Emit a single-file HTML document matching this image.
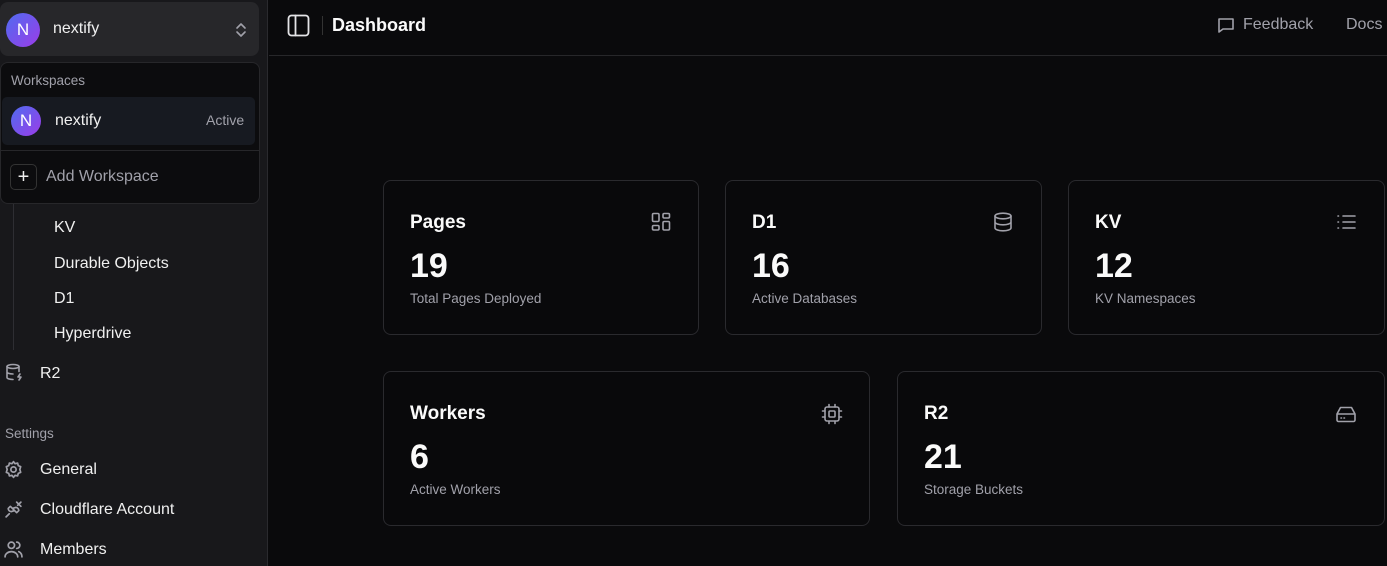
<!DOCTYPE html><html><head><style>
*{box-sizing:border-box;margin:0;padding:0}
body{width:1387px;height:566px;overflow:hidden;background:#0a0a0c;font-family:"Liberation Sans",sans-serif;color:#fafafa;position:relative}
.a{position:absolute}
.sb{left:0;top:0;width:268px;height:566px;background:#18181b;border-right:1px solid #2a2a2e}
.av{border-radius:50%;background:linear-gradient(135deg,#4f6cf0,#9b3ce8);color:#fff;display:flex;align-items:center;justify-content:center;font-size:17px}
.t{font-size:16px;color:#f0f0f0}
.card{position:absolute;border:1px solid #2a2a2e;border-radius:8px;background:#09090b}
.card .h{position:absolute;left:26px;top:31px;font-size:19px;font-weight:bold}
.card .n{position:absolute;left:26px;top:66px;font-size:34px;font-weight:bold}
.card .s{position:absolute;left:26px;top:110px;font-size:13.5px;color:#a1a1aa}
.card svg{position:absolute;top:31px}
svg{fill:none;stroke:#a1a1aa;stroke-width:1.6;stroke-linecap:round;stroke-linejoin:round}
</style></head><body>
<div class="a sb"></div>
<div class="a" style="left:0;top:2px;width:259px;height:54px;background:#27272a;border-radius:8px"></div>
<div class="a av" style="left:6px;top:13px;width:34px;height:34px">N</div>
<div class="a t" style="left:53px;top:20px;font-size:16px">nextify</div>
<svg class="a" style="left:234px;top:21px" width="14" height="18" viewBox="0 0 14 18"><path d="M3 7l4-4 4 4M3 11l4 4 4-4"/></svg>
<div class="a" style="left:13px;top:200px;width:1px;height:150px;background:#2e2e33"></div>
<div class="a" style="left:0;top:62px;width:260px;height:142px;background:#0c0c0e;border:1px solid #27272a;border-radius:8px"></div>
<div class="a" style="left:11px;top:73px;font-size:13.5px;color:#a1a1aa">Workspaces</div>
<div class="a" style="left:2px;top:97px;width:253px;height:48px;background:#171a21;border-radius:5px"></div>
<div class="a av" style="left:11px;top:106px;width:30px;height:30px">N</div>
<div class="a t" style="left:55px;top:112px;font-size:16px">nextify</div>
<div class="a" style="left:206px;top:112px;font-size:14px;color:#a1a1aa">Active</div>
<div class="a" style="left:0;top:150px;width:259px;height:1px;background:#27272a"></div>
<div class="a" style="left:10px;top:164px;width:27px;height:26px;border:1px solid #333;border-radius:5px;display:flex;align-items:center;justify-content:center;font-size:20px;color:#eee">+</div>
<div class="a" style="left:46px;top:168px;font-size:16px;color:#a1a1aa">Add Workspace</div>
<div class="a t" style="left:54px;top:219px">KV</div>
<div class="a t" style="left:54px;top:255px">Durable Objects</div>
<div class="a t" style="left:54px;top:290px">D1</div>
<div class="a t" style="left:54px;top:325px">Hyperdrive</div>
<svg class="a" style="left:5px;top:363px" width="18" height="18" viewBox="0 0 18 18"><ellipse cx="8" cy="3.5" rx="6" ry="2"/><path d="M2 3.5v11c0 1 2.5 2 6 2M14 3.5v5M2 9c0 1 2.5 2 6 2M15 11l-2 3h3l-2 3"/></svg>
<div class="a t" style="left:40px;top:365px">R2</div>
<div class="a" style="left:5px;top:426px;font-size:13.5px;color:#a1a1aa">Settings</div>
<svg class="a" style="left:4px;top:460px" width="19" height="19" viewBox="0 0 18 18"><circle cx="9" cy="9" r="2.5"/><path d="M9 1.5l1.5 2 2.4-.6.6 2.4 2.3 1L15 9l.8 2.7-2.3 1-.6 2.4-2.4-.6L9 16.5l-1.5-2-2.4.6-.6-2.4-2.3-1L3 9l-.8-2.7 2.3-1 .6-2.4 2.4.6z"/></svg>
<div class="a t" style="left:40px;top:461px">General</div>
<svg class="a" style="left:4px;top:500px" width="19" height="19" viewBox="0 0 18 18"><path d="M2 16l3-3M7 11a3 3 0 0 1-3-3l2-2 4 4zM11 7a3 3 0 0 1 3 3l-2 2-4-4zM13 5l3-3M12 2l4 4"/></svg>
<div class="a t" style="left:40px;top:501px">Cloudflare Account</div>
<svg class="a" style="left:4px;top:540px" width="19" height="19" viewBox="0 0 18 18"><circle cx="7" cy="5" r="3"/><path d="M1 16c0-3 3-5 6-5s6 2 6 5M12 2a3 3 0 0 1 0 6M14 11c2 1 3 3 3 5"/></svg>
<div class="a t" style="left:40px;top:541px">Members</div>
<div class="a" style="left:269px;top:55px;width:1118px;height:1px;background:#27272a"></div>
<svg class="a" style="left:287px;top:14px" width="23" height="23" viewBox="0 0 23 23"><rect x="1.5" y="1.5" width="20" height="20" rx="3" stroke="#e4e4e7" stroke-width="1.8"/><path d="M8.5 1.5v20" stroke="#e4e4e7" stroke-width="1.8"/></svg>
<div class="a" style="left:322px;top:16px;width:1px;height:19px;background:#333"></div>
<div class="a" style="left:332px;top:15px;font-size:18px;font-weight:bold">Dashboard</div>
<svg class="a" style="left:1217px;top:16px" width="18" height="18" viewBox="0 0 18 18"><path d="M2 3h14v10H6l-4 3z"/></svg>
<div class="a" style="left:1243px;top:16px;font-size:16px;color:#a1a1aa">Feedback</div>
<div class="a" style="left:1346px;top:16px;font-size:16px;color:#a1a1aa">Docs</div>

<div class="card" style="left:383px;top:180px;width:316px;height:155px"><div class="h">Pages</div><div class="n">19</div><div class="s">Total Pages Deployed</div>
<svg style="left:267px" width="20" height="20" viewBox="0 0 20 20"><rect x="1.5" y="1.5" width="6.5" height="8" rx="1.2"/><rect x="12" y="1.5" width="6.5" height="4.5" rx="1.2"/><rect x="12" y="9.5" width="6.5" height="8.5" rx="1.2"/><rect x="1.5" y="13.5" width="6.5" height="4.5" rx="1.2"/></svg></div>
<div class="card" style="left:725px;top:180px;width:317px;height:155px"><div class="h">D1</div><div class="n">16</div><div class="s">Active Databases</div>
<svg style="left:267px" width="20" height="20" viewBox="0 0 20 20"><ellipse cx="10" cy="4" rx="8" ry="2.8"/><path d="M2 4v12c0 1.5 3.6 2.8 8 2.8s8-1.3 8-2.8V4M2 10c0 1.5 3.6 2.8 8 2.8s8-1.3 8-2.8"/></svg></div>
<div class="card" style="left:1068px;top:180px;width:317px;height:155px"><div class="h">KV</div><div class="n">12</div><div class="s">KV Namespaces</div>
<svg style="left:267px" width="20" height="20" viewBox="0 0 20 20"><path d="M7 4h12M7 10h12M7 16h12M2 4h.5M2 10h.5M2 16h.5"/></svg></div>
<div class="card" style="left:383px;top:371px;width:487px;height:155px"><div class="h">Workers</div><div class="n">6</div><div class="s">Active Workers</div>
<svg style="left:437px" width="22" height="22" viewBox="0 0 22 22"><rect x="4" y="4" width="14" height="14" rx="2"/><rect x="8" y="8" width="6" height="6" rx="1"/><path d="M8 1.5v2.5M14 1.5v2.5M8 18v2.5M14 18v2.5M1.5 8h2.5M1.5 14h2.5M18 8h2.5M18 14h2.5"/></svg></div>
<div class="card" style="left:897px;top:371px;width:488px;height:155px"><div class="h">R2</div><div class="n">21</div><div class="s">Storage Buckets</div>
<svg style="left:437px" width="22" height="22" viewBox="0 0 22 22"><path d="M2 11h18v6a1.5 1.5 0 0 1-1.5 1.5h-15A1.5 1.5 0 0 1 2 17zM2 11l3.5-6.5h11L20 11M6 15h.5M9 15h.5"/></svg></div>
</body></html>
